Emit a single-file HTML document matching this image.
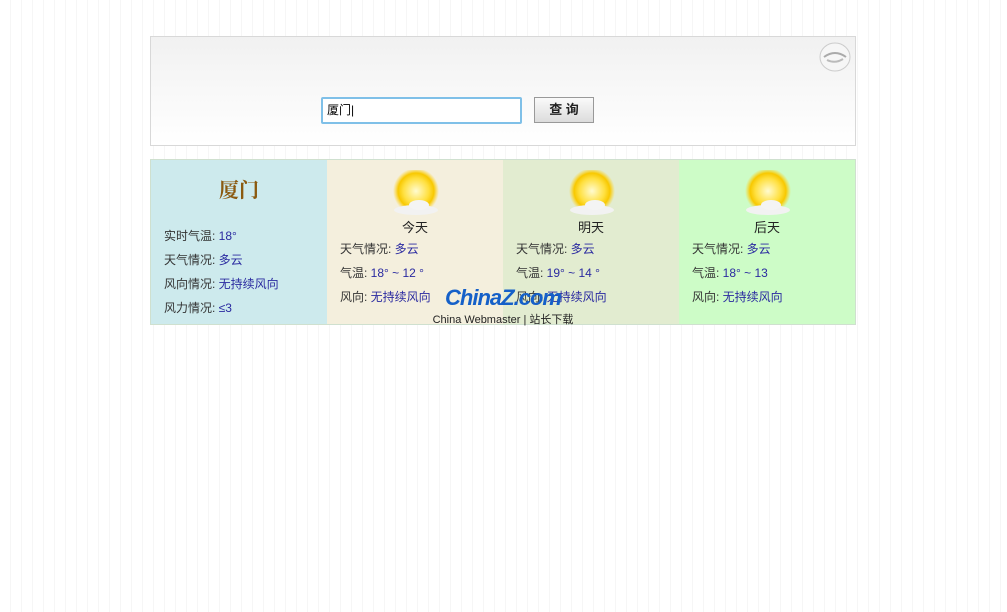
<!DOCTYPE html>
<html><head><meta charset="utf-8"><style>
html,body{margin:0;padding:0}
body{width:1007px;height:612px;overflow:hidden;position:relative;
background:#fff repeating-linear-gradient(90deg,#fff 0,#fff 10px,#f6f6f6 10px,#f6f6f6 11px);
font-family:"Liberation Sans","Noto Sans CJK SC",sans-serif;font-size:12px;color:#333}
.top{position:absolute;left:150px;top:36px;width:704px;height:108px;border:1px solid #d8d8d8;
background:linear-gradient(#f1f1f1,#fff)}
.inp{position:absolute;left:170px;top:60px;border:2px solid #7fc0e8;border-radius:2px;background:#fff;
font-size:12px;line-height:23px;padding-left:4px;box-sizing:border-box;width:201px;height:27px;color:#000}
.btn{position:absolute;left:383px;top:60px;width:60px;border:1px solid #999;background:linear-gradient(#fafafa,#dcdcdc);
text-align:center;line-height:24px;font-weight:bold;font-size:13px;color:#222;box-sizing:border-box;height:26px}
.logo{position:absolute;right:3px;top:3px}
.w{position:absolute;left:150px;top:159px;width:704px;height:164px;border:1px solid #cfe0cf;display:flex}
.c{width:176px;height:164px;position:relative}
.c1{background:#cdeaed}.c2{background:#f4efdd}.c3{background:#e2ecd0}.c4{background:#cdfcc7}
.city{position:absolute;left:0;width:176px;top:14px;text-align:center;font-size:20px;font-weight:bold;color:#8b5a10;font-family:"Liberation Serif","Noto Serif CJK SC",serif}
.l{position:absolute;left:13px;white-space:nowrap}
.v{color:#2a2aa0}
.sun{position:absolute;left:64px;top:10px}
.day{position:absolute;left:0;width:176px;top:57px;text-align:center;font-size:13px;color:#222}
.wm{position:absolute;left:278px;top:126px;width:148px;text-align:center}
.wm b{font-size:22px;font-style:italic;color:#1560c8;letter-spacing:-1px;font-family:"Liberation Sans",sans-serif;line-height:24px}
.wm div{font-size:11px;color:#222;margin-top:1px}
</style></head><body>
<div class="top">
<svg class="logo" width="34" height="32" viewBox="0 0 34 32"><ellipse cx="17" cy="17" rx="15" ry="14" fill="#f6f6f6" stroke="#ccc"/><path d="M6 17 Q17 9 28 17" stroke="#aaa" fill="none" stroke-width="2"/><path d="M9 20 Q17 24 25 19" stroke="#bbb" fill="none" stroke-width="2"/></svg>
<div class="inp">厦门|</div>
<div class="btn">查 询</div>
</div>
<svg width="0" height="0" style="position:absolute"><defs><radialGradient id="g"><stop offset="0" stop-color="#fffbd0"/><stop offset=".55" stop-color="#ffe040"/><stop offset=".78" stop-color="#f8c800"/><stop offset="1" stop-color="#ffd21a" stop-opacity="0"/></radialGradient></defs></svg>
<div class="w">
<div class="c c1"><div class="city">厦门</div>
<div class="l" style="top:67px">实时气温: <span class="v">18°</span></div>
<div class="l" style="top:91px">天气情况: <span class="v">多云</span></div>
<div class="l" style="top:115px">风向情况: <span class="v">无持续风向</span></div>
<div class="l" style="top:139px">风力情况: <span class="v">≤3</span></div></div>
<div class="c c2"><svg class="sun" width="50" height="46"><circle cx="25" cy="21" r="23" fill="url(#g)"/><ellipse cx="25" cy="40" rx="22" ry="5" fill="#f2f2f2"/><ellipse cx="28" cy="35" rx="10" ry="5" fill="#f4f4f4"/></svg>
<div class="day">今天</div>
<div class="l" style="top:80px">天气情况: <span class="v">多云</span></div>
<div class="l" style="top:104px">气温: <span class="v">18° ~ 12 °</span></div>
<div class="l" style="top:128px">风向: <span class="v">无持续风向</span></div></div>
<div class="c c3"><svg class="sun" width="50" height="46"><circle cx="25" cy="21" r="23" fill="url(#g)"/><ellipse cx="25" cy="40" rx="22" ry="5" fill="#f2f2f2"/><ellipse cx="28" cy="35" rx="10" ry="5" fill="#f4f4f4"/></svg>
<div class="day">明天</div>
<div class="l" style="top:80px">天气情况: <span class="v">多云</span></div>
<div class="l" style="top:104px">气温: <span class="v">19° ~ 14 °</span></div>
<div class="l" style="top:128px">风向: <span class="v">无持续风向</span></div></div>
<div class="c c4"><svg class="sun" width="50" height="46"><circle cx="25" cy="21" r="23" fill="url(#g)"/><ellipse cx="25" cy="40" rx="22" ry="5" fill="#f2f2f2"/><ellipse cx="28" cy="35" rx="10" ry="5" fill="#f4f4f4"/></svg>
<div class="day">后天</div>
<div class="l" style="top:80px">天气情况: <span class="v">多云</span></div>
<div class="l" style="top:104px">气温: <span class="v">18° ~ 13</span></div>
<div class="l" style="top:128px">风向: <span class="v">无持续风向</span></div></div>
<div class="wm"><b>ChinaZ.com</b><div>China Webmaster | 站长下载</div></div>
</div>
</body></html>
